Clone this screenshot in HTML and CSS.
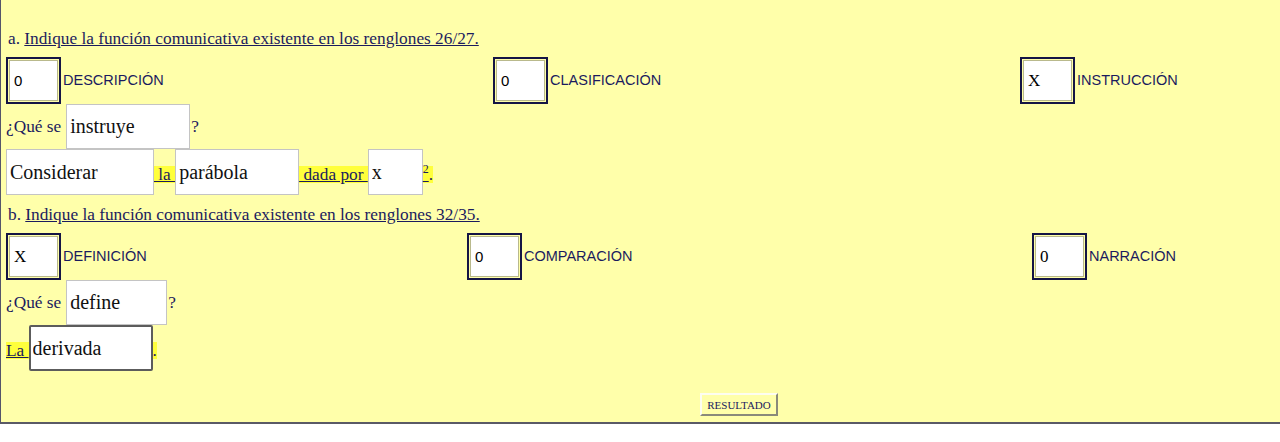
FILE: index.html
```
<!DOCTYPE html>
<html lang="es">
<head>
    <meta charset="UTF-8">
    <title>Función comunicativa</title>
    <link rel="stylesheet" href="styles.css">
</head>
<body>
    <div class="panel">
        <p class="consigna">a. <u>Indique la función comunicativa existente en los renglones 26/27.</u></p>

        <div class="opciones opciones-a">
            <div class="opcion">
                <span class="caja"><input type="text" class="marca sans" value="0"></span>
                <span class="rotulo">DESCRIPCIÓN</span>
            </div>
            <div class="opcion">
                <span class="caja"><input type="text" class="marca sans" value="0"></span>
                <span class="rotulo">CLASIFICACIÓN</span>
            </div>
            <div class="opcion">
                <span class="caja"><input type="text" class="marca" value="X"></span>
                <span class="rotulo">INSTRUCCIÓN</span>
            </div>
        </div>

        <div class="fila fila-q">
            <span class="texto">¿Qué se</span>
            <input type="text" class="campo ancho-124 con-margen" value="instruye">
            <span class="texto">?</span>
        </div>

        <div class="fila fila-c">
            <input type="text" class="campo ancho-148" value="Considerar">
            <span class="resalte"> la </span>
            <input type="text" class="campo ancho-124" value="parábola">
            <span class="resalte"> dada por </span>
            <input type="text" class="campo ancho-55" value="x">
            <span class="resalte"><sup>2</sup><span class="sin-sub">.</span></span>
        </div>

        <p class="consigna consigna-b">b. <u>Indique la función comunicativa existente en los renglones 32/35.</u></p>

        <div class="opciones opciones-b">
            <div class="opcion">
                <span class="caja"><input type="text" class="marca" value="X"></span>
                <span class="rotulo">DEFINICIÓN</span>
            </div>
            <div class="opcion">
                <span class="caja"><input type="text" class="marca sans" value="0"></span>
                <span class="rotulo">COMPARACIÓN</span>
            </div>
            <div class="opcion">
                <span class="caja"><input type="text" class="marca" value="0"></span>
                <span class="rotulo">NARRACIÓN</span>
            </div>
        </div>

        <div class="fila fila-q">
            <span class="texto">¿Qué se</span>
            <input type="text" class="campo ancho-101 con-margen" value="define">
            <span class="texto">?</span>
        </div>

        <div class="fila fila-c">
            <span class="resalte">La </span>
            <input type="text" class="campo ancho-124 activo" value="derivada">
            <span class="resalte sin-sub">.</span>
        </div>

        <div class="acciones">
            <button type="button">RESULTADO</button>
        </div>
    </div>
</body>
</html>
```

FILE: styles.css
```
body {
    margin: 0;
    background-color: #fff;
    font-family: 'Liberation Serif', 'Times New Roman', serif;
    color: #1b1b5e;
}
.panel {
    height: 424px;
    box-sizing: border-box;
    background-color: #ffffaa;
    border-left: 1px solid #55556a;
    border-bottom: 2px solid #5a5a66;
    padding: 28px 5px 0 5px;
}
.consigna {
    margin: 0 0 7px 2px;
    font-size: 17.3px;
    line-height: 22px;
}
.consigna-b {
    margin-top: 9px;
}
.opciones {
    display: grid;
    height: 47px;
}
.opciones-a {
    grid-template-columns: 487px 527px 1fr;
}
.opciones-b {
    grid-template-columns: 461px 565px 1fr;
}
.opcion {
    display: flex;
    align-items: center;
    gap: 2px;
}
.caja {
    display: block;
    border: 2px solid #151545;
    padding: 1px;
}
.marca {
    display: block;
    width: 49px;
    height: 41px;
    box-sizing: border-box;
    margin: 0;
    padding: 0 0 0 4px;
    border: 1px solid #b9b98c;
    background-color: #fff;
    font-family: 'Liberation Serif', serif;
    font-size: 17px;
    color: #000;
}
.marca.sans {
    font-family: 'Liberation Sans', Arial, sans-serif;
    font-size: 15px;
}
.rotulo {
    font-family: 'Liberation Sans', Arial, sans-serif;
    font-size: 14.5px;
    margin-bottom: 1px;
}
.fila {
    display: flex;
    align-items: center;
}
.fila-q {
    height: 45px;
}
.fila-c {
    height: 46px;
}
.texto {
    font-size: 17.3px;
}
.campo {
    height: 45px;
    box-sizing: border-box;
    margin: 0;
    padding: 0 3px;
    border: 1px solid #c4c4c4;
    background-color: #fff;
    font-family: 'Liberation Serif', serif;
    font-size: 20px;
    color: #111;
}
.fila-c .campo {
    height: 46px;
}
.con-margen {
    margin: 0 1px 0 5px;
}
.ancho-55 { width: 55px; }
.ancho-101 { width: 101px; }
.ancho-124 { width: 124px; }
.ancho-148 { width: 148px; }
.activo {
    border: 2px solid #5c5c5c;
    border-radius: 2px;
    outline: none;
    padding-left: 2px;
}
.resalte {
    white-space: pre;
    background-color: #ffff3c;
    font-size: 17.3px;
    line-height: 17px;
    text-decoration: underline;
    margin-top: 4px;
}
.resalte sup {
    font-size: 12px;
    line-height: 0;
}
.sin-sub {
    text-decoration: none;
    display: inline-block;
}
.acciones {
    margin: 22px 0 0 694px;
}
button {
    width: 78px;
    height: 23px;
    padding: 0;
    font-family: 'Liberation Serif', serif;
    font-size: 11px;
    color: #1b1b5e;
    background-color: #ffffaa;
    border: 2px solid;
    border-color: #fdfdf0 #8a8a7a #8a8a7a #fdfdf0;
}
```
